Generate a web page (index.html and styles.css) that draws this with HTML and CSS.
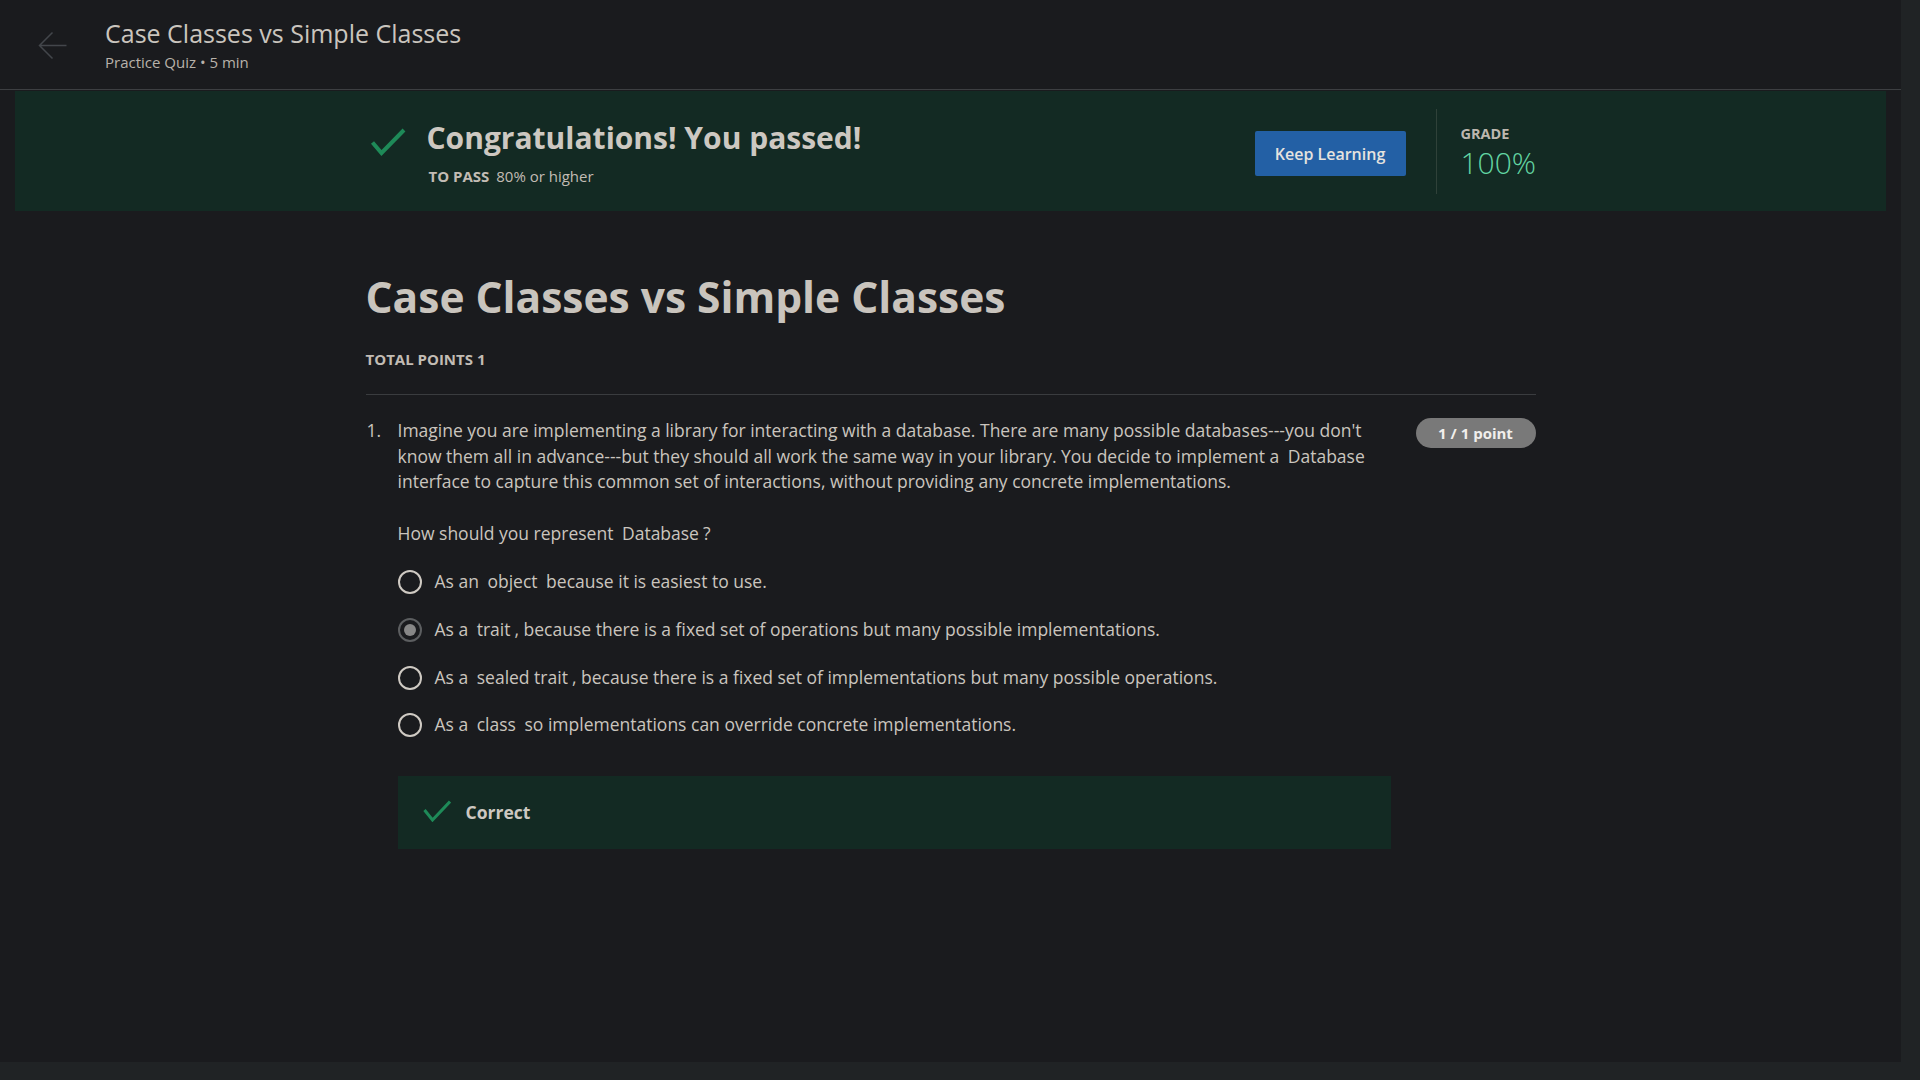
FILE: index.html
```html
<!DOCTYPE html>
<html lang="en">
<head>
<meta charset="utf-8">
<title>Case Classes vs Simple Classes</title>
<link rel="stylesheet" href="styles.css">
</head>
<body>
<div class="app">
  <header class="topbar">
    <svg class="back" width="29" height="29" viewBox="0 0 29 29" aria-hidden="true">
      <path d="M28.5 14.5H1.5M14.5 1.5L1.5 14.5L14.5 27.5" fill="none" stroke="#43464b" stroke-width="1.5"/>
    </svg>
    <div class="topbar-text">
      <div class="topbar-title">Case Classes vs Simple Classes</div>
      <div class="topbar-sub">Practice Quiz • 5 min</div>
    </div>
  </header>

  <section class="banner">
    <div class="banner-inner">
      <svg class="banner-check" width="36" height="28" viewBox="0 0 36 28" aria-hidden="true">
        <path d="M2.5 14.5L11.5 25L34 2" fill="none" stroke="#1e8a58" stroke-width="4"/>
      </svg>
      <div class="banner-text">
        <h2 class="banner-title">Congratulations! You passed!</h2>
        <div class="banner-pass"><span class="label">TO PASS</span> 80% or higher</div>
      </div>
      <div class="banner-right">
        <button class="btn-keep">Keep Learning</button>
        <div class="divider"></div>
        <div class="grade">
          <div class="grade-label">GRADE</div>
          <div class="grade-value">100%</div>
        </div>
      </div>
    </div>
  </section>

  <main class="content">
    <h1 class="quiz-title">Case Classes vs Simple Classes</h1>
    <div class="total">TOTAL POINTS 1</div>
    <div class="sep"></div>

    <div class="question">
      <div class="q-num">1.</div>
      <div class="q-body">
        <p class="q-text">Imagine you are implementing a library for interacting with a database. There are many possible databases---you don't know them all in advance---but they should all work the same way in your library. You decide to implement a <span class="code">Database</span> interface to capture this common set of interactions, without providing any concrete implementations.</p>
        <p class="q-text q-ask">How should you represent <span class="code">Database</span>?</p>

        <div class="options">
          <div class="option"><span class="radio"></span><span>As an <span class="code">object</span> because it is easiest to use.</span></div>
          <div class="option"><span class="radio checked"></span><span>As a <span class="code">trait</span>, because there is a fixed set of operations but many possible implementations.</span></div>
          <div class="option"><span class="radio"></span><span>As a <span class="code">sealed trait</span>, because there is a fixed set of implementations but many possible operations.</span></div>
          <div class="option"><span class="radio"></span><span>As a <span class="code">class</span> so implementations can override concrete implementations.</span></div>
        </div>

        <div class="feedback">
          <svg class="fb-check" width="28" height="22" viewBox="0 0 28 22" aria-hidden="true">
            <path d="M1.5 10L9.5 20L27 1.5" fill="none" stroke="#1e8a58" stroke-width="3"/>
          </svg>
          <span class="fb-text">Correct</span>
        </div>
      </div>
      <div class="badge">1 / 1 point</div>
    </div>
  </main>
</div>
<div class="vscroll"></div>
<div class="hscroll"></div>
</body>
</html>
```

FILE: styles.css
```css
* { box-sizing: border-box; }

html, body {
  margin: 0;
  height: 100%;
}

body {
  font-family: "Open Sans", "Noto Sans", sans-serif;
  color: #cac5be;
  background: #1f2224;
  display: grid;
  grid-template-columns: 1fr 19px;
  grid-template-rows: 1fr 18px;
  overflow: hidden;
}

.app {
  background: #1a1b1e;
  overflow: hidden;
  grid-column: 1;
  grid-row: 1;
}

.vscroll {
  grid-column: 2;
  grid-row: 1 / span 2;
  background: #202325;
}

.hscroll {
  grid-column: 1;
  grid-row: 2;
  background: #202325;
}

/* Header */
.topbar {
  height: 90px;
  border-bottom: 1px solid #3d3f42;
  display: flex;
  align-items: flex-start;
  padding: 17px 0 0 38px;
  background: #1a1b1e;
}

.back {
  margin-top: 14px;
  margin-right: 38px;
  flex: none;
}

.topbar-title {
  font-size: 25px;
  line-height: 32px;
  color: #cac5be;
}

.topbar-sub {
  margin-top: 3px;
  font-size: 15px;
  line-height: 20px;
  color: #b8b2aa;
}

/* Banner */
.banner {
  margin: 1px 15px 0;
  height: 120px;
  background: #132a23;
  display: flex;
  justify-content: center;
}

.banner-inner {
  width: 1170px;
  display: flex;
  align-items: flex-start;
}

.banner-check {
  margin: 37px 21px 0 4px;
  flex: none;
}

.banner-text {
  padding-top: 27px;
}

.banner-title {
  margin: 0;
  font-size: 30px;
  line-height: 40px;
  font-weight: 700;
  color: #cdc8c1;
}

.banner-pass {
  margin-top: 8px;
  margin-left: 2px;
  font-size: 15px;
  line-height: 20px;
  color: #c2bcb4;
}

.banner-pass .label {
  font-weight: 700;
  margin-right: 3px;
}

.banner-right {
  margin-left: auto;
  align-self: center;
  display: flex;
  align-items: center;
}

.btn-keep {
  width: 151px;
  height: 45px;
  background: #2360a5;
  color: #e6e3df;
  border: none;
  border-radius: 2px;
  font-family: inherit;
  font-size: 16px;
  font-weight: 600;
  padding: 0;
  margin-top: 5px;
}

.divider {
  width: 1px;
  height: 85px;
  background: #2f4139;
  margin: 0 24px 0 30px;
}

.grade {
  width: 75px;
  padding-top: 3px;
}

.grade-label {
  font-size: 14.5px;
  line-height: 18px;
  font-weight: 700;
  color: #bdb7af;
}

.grade-value {
  margin-top: 2px;
  font-size: 30px;
  line-height: 36px;
  font-weight: 300;
  color: #62d5a2;
}

/* Content */
.content {
  width: 1170px;
  margin: 0 auto;
}

.quiz-title {
  margin: 58px 0 0;
  font-size: 42.5px;
  line-height: 56px;
  font-weight: 700;
  color: #c9c4bd;
}

.total {
  margin-top: 24px;
  font-size: 15px;
  line-height: 20px;
  font-weight: 700;
  color: #c2bcb4;
}

.sep {
  margin-top: 25px;
  height: 1px;
  background: #3a3c3f;
}

.question {
  padding-top: 23px;
  display: flex;
  align-items: flex-start;
}

.q-num {
  width: 32px;
  flex: none;
  font-size: 17.5px;
  line-height: 25.6px;
  padding-left: 1px;
}

.q-body {
  width: 993px;
  flex: none;
}

.q-text {
  margin: 0;
  font-size: 17.5px;
  line-height: 25.7px;
  color: #cac5be;
}

.q-ask {
  margin-top: 25.5px;
}

.code {
  margin: 0 4px;
}

.options {
  margin-top: 12px;
}

.option {
  display: flex;
  align-items: center;
  gap: 13px;
  padding: 11px 0;
  font-size: 17.5px;
  line-height: 25.7px;
}

.radio {
  width: 24px;
  height: 24px;
  border-radius: 50%;
  border: 2.5px solid #cfcac3;
  flex: none;
  display: flex;
  align-items: center;
  justify-content: center;
}

.radio.checked {
  border-color: #5c5e60;
}

.radio.checked::after {
  content: "";
  width: 12px;
  height: 12px;
  border-radius: 50%;
  background: #878787;
}

.feedback {
  margin-top: 27px;
  height: 73px;
  background: #132a23;
  display: flex;
  align-items: center;
  padding: 0 25px;
}

.fb-check {
  flex: none;
  margin-right: 15px;
  margin-top: -4px;
}

.fb-text {
  font-size: 17.5px;
  font-weight: 700;
  color: #cdc8c1;
  margin-top: -2px;
}

.badge {
  margin-left: auto;
  width: 120px;
  height: 30px;
  border-radius: 15px;
  background: #797979;
  color: #f1efec;
  font-size: 15px;
  font-weight: 700;
  display: flex;
  align-items: center;
  justify-content: center;
}
```
